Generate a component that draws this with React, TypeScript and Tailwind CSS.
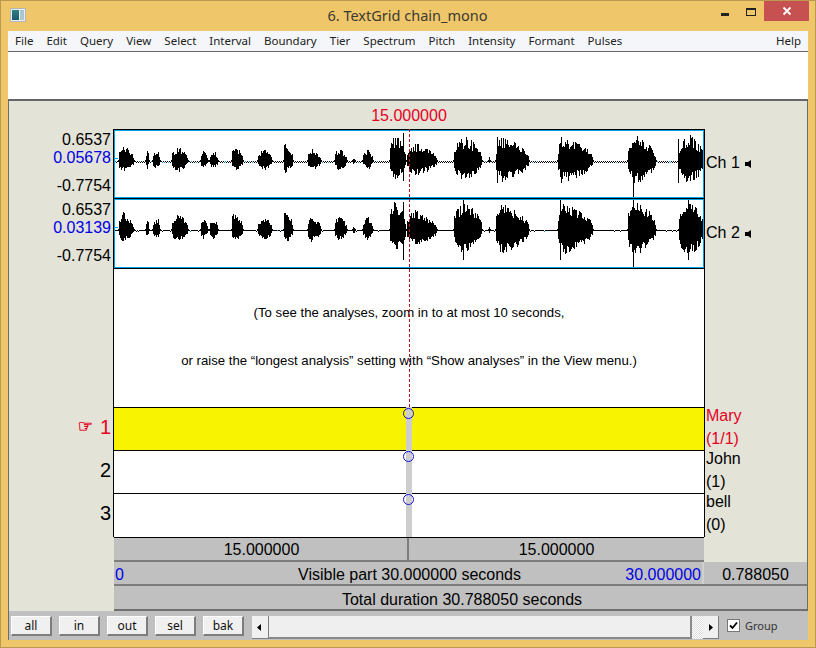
const menus = ["File", "Edit", "Query", "View", "Select", "Interval", "Boundary", "Tier", "Spectrum", "Pitch", "Intensity", "Formant", "Pulses"];
const buttons = ["all", "in", "out", "sel", "bak"];

// x0, x1, up, down, peak position
const bursts: number[][] = [
  [118, 134, 16, 11, 0.3],
  [145, 149, 11, 8, 0.5],
  [152, 160, 11, 8, 0.7],
  [171, 188, 15, 11, 0.45],
  [200, 208, 11, 9, 0.3],
  [209, 218, 11, 9, 0.5],
  [231, 243, 18, 11, 0.25],
  [257, 272, 12, 10, 0.5],
  [283, 293, 20, 13, 0.15],
  [307, 321, 14, 11, 0.3],
  [334, 347, 13, 10, 0.35],
  [352, 355, 3, 3, 0.5],
  [362, 373, 12, 9, 0.5],
  [389, 406, 27, 20, 0.35],
  [406, 437, 18, 15, 0.3],
  [453, 482, 26, 22, 0.4],
  [488, 490, 4, 4, 0.5],
  [495, 529, 25, 22, 0.2],
  [557, 593, 25, 22, 0.2],
  [627, 656, 28, 24, 0.25],
  [678, 704, 28, 24, 0.4],
];

function makeWave(seed: number, scale: number, core: number, spikes: number[][], solid: boolean) {
  let s = seed;
  const rand = () => {
    s = (s * 16807) % 2147483647;
    return s / 2147483647;
  };
  const c = 30;
  let black = "";
  let cyan = "";
  for (let x = 115; x < 703; x++) {
    const px = x - 115;
    const b = bursts.find((k) => x >= k[0] && x <= k[1]);
    if (b) {
      const t = (x - b[0]) / (b[1] - b[0]);
      const env = t < b[4] ? Math.pow(t / b[4], 0.3) : Math.pow((1 - t) / (1 - b[4]), 0.45);
      // a few columns reach the envelope, the rest stay around the core
      const jag = () => (rand() < 0.35 ? 0.85 + 0.15 * rand() : core + 0.3 * rand());
      const up = Math.max(1, b[2] * scale * env * jag());
      const down = Math.max(1, b[3] * scale * env * jag());
      black += `M${px + 0.5} ${c - Math.round(up)}V${c + Math.round(down)}`;
    } else if (solid && rand() < 0.85) {
      black += `M${px} ${c + 0.5}h1`;
    } else {
      const y = px % 2 === 0 ? c : c + 1;
      if (rand() < 0.13) cyan += `M${px} ${y + 0.5}h1`;
      else black += `M${px} ${y + 0.5}h1`;
    }
  }
  for (const sp of spikes) {
    black += `M${sp[0] - 115 + 0.5} ${sp[1]}V${sp[2]}`;
  }
  return { black, cyan };
}

const wave1 = makeWave(4711, 1, 0.5, [[633, 12, 66], [403, 2, 50], [497, 6, 52], [561, 6, 52], [678, 8, 52]], false);
const wave2 = makeWave(9127, 1.12, 0.55, [[633, -2, 68], [463, -2, 60], [560, -2, 60], [688, -2, 60], [403, 2, 60]], true);

function Wave({ h, wave }: { h: string; wave: { black: string; cyan: string } }) {
  return (
    <div className="border-t border-black">
      <div className={`border border-[#00a2e8] bg-white ${h}`}>
        <svg width="588" height="100%" className="block overflow-hidden" shapeRendering="crispEdges">
          <path d={wave.black} stroke="#000" strokeWidth="1" fill="none" />
          <path d={wave.cyan} stroke="#00a2e8" strokeWidth="1" fill="none" />
          <path d="M0 27.5h3" stroke="#00a2e8" strokeWidth="1" />
        </svg>
      </div>
    </div>
  );
}

function AxisLabels({ mid, top }: { mid: string; top: string }) {
  return (
    <div className="flex h-full flex-col items-end pr-[2px] leading-[18px]">
      <span className={top}>0.6537</span>
      <span className="text-[#0000e6]">{mid}</span>
      <span className="mt-[10px]">-0.7754</span>
    </div>
  );
}

function ChannelLabel({ name, pb }: { name: string; pb: string }) {
  return (
    <div className={`flex h-full items-center pl-[1px] ${pb}`}>
      <span className="w-[39px]">{name}</span>
      <svg width="6" height="8" viewBox="0 0 6 8" className="mt-[2px]">
        <path d="M0 2h3l3-2v8l-3-2H0z" fill="#000" />
      </svg>
    </div>
  );
}

function TierLabels({ top, bottom, red }: { top: string; bottom: string; red?: boolean }) {
  return (
    <div className={`-mt-[3px] pl-[1px] leading-[23px] ${red ? "text-[#e6001e]" : ""}`}>
      <div>{top}</div>
      <div>{bottom}</div>
    </div>
  );
}

function Tier({ h, bg, num, label }: { h: string; bg: string; num: React.ReactNode; label: React.ReactNode }) {
  return (
    <div className={`flex ${h}`}>
      <div className="flex w-[104px] items-center justify-end pb-[4px] pr-[2px] text-[20px]">{num}</div>
      <div className={`relative w-[592px] border-x border-t border-black ${bg}`}>
        <div className="absolute -top-px bottom-0 left-[292px] w-[6px] bg-[#cdcdcd]" />
        <div className="absolute left-[289px] top-0 h-[11px] w-[11px] rounded-full border border-[#1010e0]" />
      </div>
      <div className="w-[102px]">{label}</div>
    </div>
  );
}

export default function App() {
  return (
    <div className="flex h-[648px] w-[816px] flex-col border border-[#b99a4e] bg-[#efc669] text-[16px] text-black [font-family:'Liberation_Sans',Arial,sans-serif]">
      {/* Title bar */}
      <div className="relative flex h-[30px] flex-none items-center justify-center [font-family:'Noto_Sans',sans-serif]">
        <div className="absolute left-[9px] top-[7px] flex h-[14px] w-[16px] border border-[#b5b5b5] bg-[#e9eef2] p-px">
          <div className="h-full w-[7px] bg-gradient-to-b from-[#2f7f83] to-[#1d5a6a]" />
          <div className="ml-px h-full w-[4px] bg-[#a9c6cf]" />
        </div>
        <span className="-mt-[2px] ml-[-1px] text-[14.5px] leading-none text-[#3b3a32]">6. TextGrid chain_mono</span>
        <div className="absolute left-[720px] top-[12px] h-[3px] w-[8px] bg-[#222]" />
        <div className="absolute left-[745px] top-[7px] h-[8px] w-[10px] border border-t-2 border-[#222]" />
        <div className="absolute left-[763px] top-0 flex h-[20px] w-[45px] items-center justify-center bg-[#c75050]">
          <svg width="10" height="10" viewBox="0 0 10 10">
            <path d="M1.5 1.5l7 7M8.5 1.5l-7 7" stroke="#fff" strokeWidth="1.8" fill="none" />
          </svg>
        </div>
      </div>

      <div className="mx-[7px] flex h-[609px] flex-none flex-col">
        {/* Menu bar */}
        <div className="flex h-[20px] flex-none items-center bg-[#f4f6f9] pl-[7px] pr-[7px] text-[11.5px] text-[#222] [font-family:'Noto_Sans',sans-serif]">
          <div className="flex gap-[13px]">
            {menus.map((m) => (
              <span key={m}>{m}</span>
            ))}
          </div>
          <span className="ml-auto">Help</span>
        </div>

        {/* Info panel */}
        <div className="h-[50px] flex-none border-b-2 border-t border-[#666] bg-white" />

        {/* Canvas */}
        <div className="relative flex h-[510px] flex-none flex-col border-x border-[#6c6c6c] bg-[#e3e3d8]">
          <div className="flex h-[28px] items-end pb-[1px] pl-[104px]">
            <div className="w-[592px] text-center text-[#e6001e]">15.000000</div>
          </div>

          <div className="flex h-[69px]">
            <div className="w-[104px]"><AxisLabels mid="0.05678" top="mt-[2px]" /></div>
            <div className="w-[592px] border-x border-black"><Wave h="h-[68px]" wave={wave1} /></div>
            <div className="w-[102px]"><ChannelLabel name="Ch 1" pb="pb-[2px]" /></div>
          </div>
          <div className="flex h-[70px]">
            <div className="w-[104px]"><AxisLabels mid="0.03139" top="mt-[3px]" /></div>
            <div className="w-[592px] border-x border-black"><Wave h="h-[69px]" wave={wave2} /></div>
            <div className="w-[102px]"><ChannelLabel name="Ch 2" pb="pb-0" /></div>
          </div>

          {/* Analysis message */}
          <div className="flex h-[139px]">
            <div className="w-[104px]" />
            <div className="flex w-[592px] flex-col items-center border-x border-t border-black bg-white pt-[36px] text-[13.2px] leading-[16px]">
              <span>(To see the analyses, zoom in to at most 10 seconds,</span>
              <span className="mt-[32px]">or raise the “longest analysis” setting with “Show analyses” in the View menu.)</span>
            </div>
            <div className="w-[102px]" />
          </div>

          <Tier
            h="h-[43px]"
            bg="bg-[#f8f300]"
            num={<span className="flex items-center gap-[7px] text-[#e6001e]"><span className="text-[17px] [-webkit-text-stroke:0.4px_#e6001e] [font-family:'DejaVu_Sans',sans-serif]">☞</span>1</span>}
            label={<TierLabels top="Mary" bottom="(1/1)" red />}
          />
          <Tier h="h-[43px]" bg="bg-white" num="2" label={<TierLabels top="John" bottom="(1)" />} />
          <Tier h="h-[44px]" bg="bg-white" num="3" label={<TierLabels top="bell" bottom="(0)" />} />

          {/* Time rows */}
          <div className="flex h-[25px]">
            <div className="w-[105px]" />
            <div className="flex w-[590px] border-b-2 border-t border-b-[#7d7d7d] border-t-black bg-[#c0c0c0] leading-[24px]">
              <div className="w-[295px] border-r-2 border-[#7d7d7d] pl-[2px] text-center">15.000000</div>
              <div className="flex-1 text-center">15.000000</div>
            </div>
          </div>
          <div className="ml-[105px] flex h-[24px] border-b-2 border-[#7d7d7d] bg-[#c0c0c0] leading-[25px]">
            <div className="relative w-[590px] border-r-2 border-[#d0d0d0] pl-[3px] text-center">
              <span className="absolute left-[1px] text-[#0000e6]">0</span>
              Visible part 30.000000 seconds
              <span className="absolute right-[1px] text-[#0000e6]">30.000000</span>
            </div>
            <div className="flex-1 text-center">0.788050</div>
          </div>
          <div className="ml-[105px] flex h-[25px] items-center justify-center border-b-2 border-[#6f6f6f] bg-[#c0c0c0] pl-[3px] pt-[4px]">
            Total duration 30.788050 seconds
          </div>

          {/* Time cursor */}
          <div className="absolute left-[400px] top-[28px] h-[278px] border-l border-dashed border-[#b8131d]" />
        </div>

        {/* Bottom bar */}
        <div className="flex h-[29px] flex-none items-start border-l border-[#6c6c6c] bg-[#c0c0c0] pl-[2px] text-[12px] text-[#111] [font-family:'Noto_Sans',sans-serif]">
          <div className="mt-[5px] flex gap-[7px]">
            {buttons.map((b) => (
              <div key={b} className="flex h-[20px] w-[41px] items-center justify-center border-b-2 border-l border-r-2 border-t border-b-[#7d7d7d] border-l-white border-r-[#7d7d7d] border-t-white bg-[#f0f0f0]">
                {b}
              </div>
            ))}
          </div>
          <div className="ml-[8px] mt-[5px] flex h-[23px]">
            <div className="flex w-[17px] items-center justify-center border-b border-r border-b-[#7d7d7d] border-r-[#7d7d7d] bg-[#f0f0f0] pr-[3px]">
              <svg width="4" height="7" viewBox="0 0 4 7"><path d="M4 0v7L0 3.5z" fill="#000" /></svg>
            </div>
            <div className="w-[423px] border-b-2 border-r-2 border-b-[#8a8a8a] border-r-[#8a8a8a] bg-[#efefef]" />
            <div className="w-[11px] bg-[repeating-conic-gradient(#ffffff_0_25%,#dcdcdc_0_50%)] bg-[length:2px_2px]" />
            <div className="flex w-[16px] items-center justify-center border-b border-r border-b-[#7d7d7d] border-r-[#7d7d7d] bg-[#f0f0f0]">
              <svg width="4" height="7" viewBox="0 0 4 7"><path d="M0 0v7l4-3.5z" fill="#000" /></svg>
            </div>
          </div>
          <div className="ml-[8px] mt-[8px] flex h-[13px] w-[13px] items-center justify-center border border-[#777] bg-white">
            <svg width="9" height="9" viewBox="0 0 9 9"><path d="M1 4.5l2.5 2.5L8 1.5" stroke="#000" strokeWidth="1.8" fill="none" /></svg>
          </div>
          <span className="ml-[5px] mt-[7px] text-[11px] leading-[16px] text-[#333]">Group</span>
        </div>
      </div>
    </div>
  );
}
